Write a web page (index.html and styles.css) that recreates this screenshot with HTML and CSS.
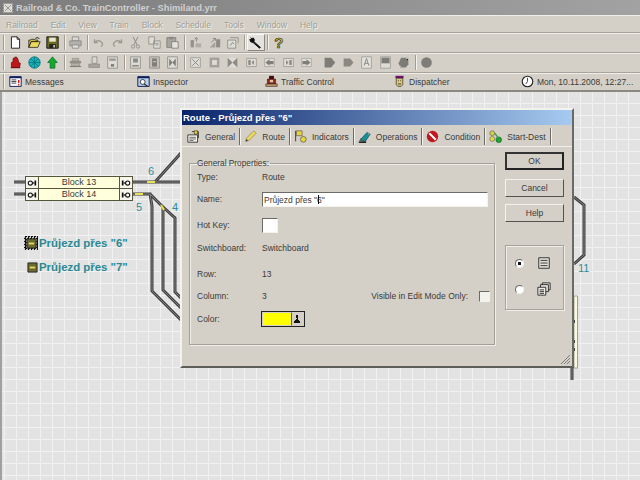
FILE: index.html
```html
<!DOCTYPE html>
<html>
  <head>
    <title>Railroad &amp; Co. TrainController - Shimiland.yrr</title>
    <link rel="stylesheet" href="styles.css">
  </head>

  <body>
    <svg class="defs" width="0" height="0">
      <symbol id="i-new" viewBox="0 0 16 16"><path d="M3 1h7l3 3v11H3z" fill="#fff" stroke="#000"/><path d="M10 1v3h3" fill="none" stroke="#000"/></symbol>
      <symbol id="i-open" viewBox="0 0 16 16"><path d="M1 14V5h2l1-1h4l1 1h3v2H4l-3 7z" fill="#c8b84a" stroke="#000" stroke-width=".8"/><path d="M1 14l3-7h11l-3 7z" fill="#e8d860" stroke="#000" stroke-width=".8"/><path d="M9 3q2-2 5 0" fill="none" stroke="#000"/></symbol>
      <symbol id="i-save" viewBox="0 0 16 16"><path d="M1 1h14v14H1z" fill="#6a6a20" stroke="#000"/><path d="M4 2h8v5H4z" fill="#e8e8d8"/><path d="M4 10h8v5H4z" fill="#222"/><path d="M9 11h2v3H9z" fill="#ccc"/></symbol>
      <symbol id="i-print" viewBox="0 0 16 16"><path d="M4 1h8v5H4z" fill="#d8d6d0" stroke="#888"/><path d="M1 6h14v6H1z" fill="#b4b2ac" stroke="#888"/><path d="M4 11h8v4H4z" fill="#e0ded8" stroke="#888"/></symbol>
      <symbol id="i-undo" viewBox="0 0 16 16"><path d="M3 4v4h4M3 8q4-4 8-1t0 6" fill="none" stroke="#9a9890" stroke-width="1.6"/></symbol>
      <symbol id="i-redo" viewBox="0 0 16 16"><path d="M13 4v4H9M13 8q-4-4-8-1t0 6" fill="none" stroke="#9a9890" stroke-width="1.6"/></symbol>
      <symbol id="i-cut" viewBox="0 0 16 16"><path d="M5 1l5 10M11 1L6 11" stroke="#8c8a84" fill="none" stroke-width="1.2"/><circle cx="5" cy="13" r="2" fill="none" stroke="#8c8a84"/><circle cx="11" cy="13" r="2" fill="none" stroke="#8c8a84"/></symbol>
      <symbol id="i-copy" viewBox="0 0 16 16"><path d="M1 1h7v9H1zM7 6h8v9H7z" fill="#dedcd6" stroke="#8c8a84"/><path d="M9 9h4M9 11h4" stroke="#8c8a84"/></symbol>
      <symbol id="i-paste" viewBox="0 0 16 16"><path d="M1 2h11v12H1z" fill="#a8a69e" stroke="#7c7a74"/><path d="M4 1h5v3H4z" fill="#888"/><path d="M7 7h8v8H7z" fill="#e6e4de" stroke="#7c7a74"/></symbol>
      <symbol id="i-edit1" viewBox="0 0 16 16"><path d="M2 5h4v9H2z" fill="#94928a"/><path d="M8 9h7v5H8z" fill="#b0aea6"/><path d="M9 2v5M7 4l2-2 2 2" fill="none" stroke="#7c7a74"/></symbol>
      <symbol id="i-edit2" viewBox="0 0 16 16"><path d="M2 14l7-7v7z" fill="#a4a29a"/><path d="M10 4h5v10h-5z" fill="#8e8c84"/><path d="M4 8l5-5M6 3h3v3" fill="none" stroke="#7c7a74"/></symbol>
      <symbol id="i-edit3" viewBox="0 0 16 16"><path d="M2 5h10v10H2z" fill="#dedcd6" stroke="#8c8a84"/><path d="M5 2h10v7" fill="none" stroke="#8c8a84"/><path d="M5 12l3-4 2 2" fill="none" stroke="#7c7a74"/></symbol>
      <symbol id="i-wrench" viewBox="0 0 16 16"><path d="M2 2l3 3M5 2a4 4 0 0 1 1 5l8 7-1 1-8-7a4 4 0 0 1-4-4" fill="#111" stroke="#111" stroke-width="1.2"/></symbol>
      <symbol id="i-hand" viewBox="0 0 16 16"><path d="M3 14V8l2-1V3l2-1 1-1 2 1 1 2 1 4 2 1-1 5z" fill="#c01818" stroke="#500" stroke-width=".8"/><path d="M2 14h12v1H2z" fill="#600"/></symbol>
      <symbol id="i-globe" viewBox="0 0 16 16"><circle cx="8" cy="8" r="7" fill="#18b0b8" stroke="#0a6c74"/><path d="M1 8h14M8 1v14M3 3l10 10M13 3L3 13" stroke="#0a6c74" stroke-width=".8"/></symbol>
      <symbol id="i-up" viewBox="0 0 16 16"><path d="M8 1l6 7h-3v7H5V8H2z" fill="#18a828" stroke="#064" stroke-width=".8"/></symbol>
      <symbol id="i-loco" viewBox="0 0 16 16"><path d="M1 6h14v3H1z" fill="#94928a"/><path d="M4 3h8v3H4zM3 9h10v3H3z" fill="#b4b2aa" stroke="#84827a" stroke-width=".7"/><path d="M1 13h14" stroke="#84827a" stroke-width="1.4"/></symbol>
      <symbol id="i-desk" viewBox="0 0 16 16"><path d="M5 1h6v8H5z" fill="#d8d6d0" stroke="#8c8a84"/><path d="M1 10h13v4H1z" fill="#a8a69e" stroke="#8c8a84"/></symbol>
      <symbol id="i-sheet" viewBox="0 0 16 16"><path d="M2 1h12v14H2z" fill="#dedcd6" stroke="#8c8a84"/><path d="M4 3h8v3H4z" fill="#9c9a92"/><path d="M6 10h4v3H6z" fill="#7c7a74"/></symbol>
      <symbol id="i-box1" viewBox="0 0 16 16"><path d="M2 1h12v14H2z" fill="#dedcd6" stroke="#8c8a84"/><path d="M5 3h6v5H5z" fill="#8c8a84"/><path d="M4 11h8v2H4z" fill="#8c8a84"/></symbol>
      <symbol id="i-box2" viewBox="0 0 16 16"><path d="M2 1h12v14H2z" fill="#c4c2ba" stroke="#8c8a84"/><path d="M5 3h6v10H5z" fill="#807e78"/><path d="M6 7h4" stroke="#dedcd6"/></symbol>
      <symbol id="i-box3" viewBox="0 0 16 16"><path d="M2 1h12v14H2z" fill="#dedcd6" stroke="#8c8a84"/><path d="M4 3l4 5-4 5zM12 3L8 8l4 5z" fill="#7c7a74"/></symbol>
      <symbol id="i-x" viewBox="0 0 16 16"><path d="M2 2h12v12H2z" fill="#dedcd6" stroke="#9c9a92"/><path d="M4 4l8 8M12 4l-8 8" stroke="#8c8a84" stroke-width="1.2"/></symbol>
      <symbol id="i-square" viewBox="0 0 16 16"><path d="M2 2h12v12H2z" fill="#a4a29a"/><path d="M5 5h6v6H5z" fill="#dedcd6"/></symbol>
      <symbol id="i-xx" viewBox="0 0 16 16"><path d="M2 2h12v12H2z" fill="#dedcd6"/><path d="M2 2l6 6-6 6zM14 2L8 8l6 6z" fill="#8c8a84"/></symbol>
      <symbol id="i-split" viewBox="0 0 16 16"><path d="M2 3h12v10H2z" fill="#dedcd6" stroke="#9c9a92"/><path d="M4 5h3v6H4z" fill="#8c8a84"/><path d="M11 5l-3 3 3 3z" fill="#8c8a84"/></symbol>
      <symbol id="i-left" viewBox="0 0 16 16"><path d="M2 3h12v10H2z" fill="#dedcd6" stroke="#aaa8a0"/><path d="M3 8l5-4v2h5v4H8v2z" fill="#807e78"/></symbol>
      <symbol id="i-split2" viewBox="0 0 16 16"><path d="M2 3h12v10H2z" fill="#dedcd6" stroke="#9c9a92"/><path d="M9 5h3v6H9z" fill="#8c8a84"/><path d="M5 5l3 3-3 3z" fill="#8c8a84"/></symbol>
      <symbol id="i-right" viewBox="0 0 16 16"><path d="M2 3h12v10H2z" fill="#dedcd6" stroke="#aaa8a0"/><path d="M13 8L8 4v2H3v4h5v2z" fill="#807e78"/></symbol>
      <symbol id="i-tag" viewBox="0 0 16 16"><path d="M2 2h8l5 6-5 6H2z" fill="#7e7c76"/></symbol>
      <symbol id="i-tag2" viewBox="0 0 16 16"><path d="M2 3h8l4 5-4 5H2z" fill="#8a8880"/></symbol>
      <symbol id="i-letter" viewBox="0 0 16 16"><path d="M2 1h12v14H2z" fill="#e4e2dc" stroke="#9c9a92"/><path d="M5 12l3-9 3 9M6 9h4" fill="none" stroke="#7c7a74"/></symbol>
      <symbol id="i-doc" viewBox="0 0 16 16"><path d="M2 1h12v14H2z" fill="#dedcd6" stroke="#9c9a92"/><path d="M3 2h10v7H3z" fill="#7e7c76"/></symbol>
      <symbol id="i-tree" viewBox="0 0 16 16"><path d="M5 2h9v8l-3 4H4L2 9z" fill="#7e7c76"/><path d="M2 13h3M11 3h3v3" stroke="#dedcd6"/></symbol>
      <symbol id="i-dot" viewBox="0 0 16 16"><circle cx="8" cy="8" r="6.5" fill="#7e7c76"/></symbol>
      <symbol id="i-msg" viewBox="0 0 16 16"><path d="M1 2h14v12H1z" fill="#fff" stroke="#102060" stroke-width="1.2"/><path d="M1 2h14v2H1z" fill="#102060"/><path d="M3 6h6M3 8h6M3 10h6" stroke="#222"/><path d="M12 6v4" stroke="#c00" stroke-width="1.6"/><path d="M12 11v2" stroke="#c00" stroke-width="1.4"/></symbol>
      <symbol id="i-insp" viewBox="0 0 16 16"><path d="M1 2h14v12H1z" fill="#b8d0e8" stroke="#102060" stroke-width="1.2"/><path d="M1 2h14v2H1z" fill="#102060"/><circle cx="7" cy="8.500" r="3" fill="#fff" stroke="#222"/><path d="M9 11l4 3" stroke="#222" stroke-width="1.4"/></symbol>
      <symbol id="i-traffic" viewBox="0 0 16 16"><path d="M5 1h6v4H5z" fill="#401010"/><path d="M3 5h10v6H3z" fill="#902820" stroke="#301010" stroke-width=".7"/><path d="M6 6h4v3H6z" fill="#d8c8a0"/><path d="M1 11h14v3H1z" fill="#c0a070" stroke="#301010" stroke-width=".7"/></symbol>
      <symbol id="i-disp" viewBox="0 0 16 16"><path d="M3 1h10v3H3z" fill="#701070"/><path d="M4 4h8v8l-2 2H6l-2-2z" fill="#e0c878" stroke="#222" stroke-width=".8"/><path d="M6 7h1M9 7h1M6 11h4" stroke="#222"/></symbol>
      <symbol id="i-clock" viewBox="0 0 16 16"><circle cx="8" cy="8" r="6.500" fill="#fff" stroke="#222" stroke-width="1.4"/><path d="M8 3.500V8l-2 3" fill="none" stroke="#222"/></symbol>
      <symbol id="i-general" viewBox="0 0 16 16"><path d="M1 6h12v9H1z" fill="#f4f2ea" stroke="#222"/><path d="M3 9h8M3 11h8M3 13h5" stroke="#555"/><path d="M6 2h8v8" fill="none" stroke="#222"/><path d="M9 1h4v4H9z" fill="#e8d040" stroke="#222" stroke-width=".7"/></symbol>
      <symbol id="i-pencil" viewBox="0 0 16 16"><path d="M2 14l1-4 9-9 3 3-9 9z" fill="#e8d860" stroke="#8a8040" stroke-width=".8"/><path d="M2 14l1-3 2 2z" fill="#333"/></symbol>
      <symbol id="i-flags" viewBox="0 0 16 16"><path d="M2 1v13" stroke="#222"/><path d="M3 1h7v6H3z" fill="#e8d040" stroke="#444" stroke-width=".7"/><circle cx="11.500" cy="11.500" r="3.500" fill="#e8d840" stroke="#444" stroke-width=".8"/></symbol>
      <symbol id="i-ops" viewBox="0 0 16 16"><path d="M2 13L11 3l4 2-6 9z" fill="#189098" stroke="#084850" stroke-width=".8"/><path d="M1 14h9v2H1z" fill="#222"/><path d="M11 2l3 1-1 3" fill="none" stroke="#bbb"/><path d="M3 10l3 3" stroke="#c02020"/></symbol>
      <symbol id="i-no" viewBox="0 0 16 16"><circle cx="8" cy="8" r="7" fill="#c01820"/><path d="M4 4l8 8" stroke="#fff" stroke-width="2.400"/></symbol>
      <symbol id="i-route" viewBox="0 0 16 16"><circle cx="4" cy="4" r="3" fill="#d8d040" stroke="#555" stroke-width=".7"/><circle cx="4" cy="11" r="3" fill="#e8d840" stroke="#555" stroke-width=".7"/><circle cx="12" cy="12" r="3.500" fill="#28a030" stroke="#064" stroke-width=".7"/><path d="M7 4l4 5" stroke="#28a030" stroke-width="1.500"/></symbol>
      <symbol id="i-list" viewBox="0 0 16 16"><path d="M2 2h12v12H2z" fill="#e4e2dc" stroke="#222"/><path d="M4 5h8M4 8h8M4 11h8" stroke="#222"/></symbol>
      <symbol id="i-stack" viewBox="0 0 16 16"><path d="M6 1h9v8H6z" fill="#e4e2dc" stroke="#222"/><path d="M4 3h9v8H4z" fill="#e4e2dc" stroke="#222"/><path d="M1 6h9v9H1z" fill="#f0eee8" stroke="#222"/><path d="M3 9h5M3 11h5M3 13h5" stroke="#222"/></symbol>
      <symbol id="i-conn" viewBox="0 0 12 12"><path d="M2 3v6" stroke="#111" stroke-width="2"/><path d="M3 6h5" stroke="#111" stroke-width="1.500"/><circle cx="8" cy="6" r="2.500" fill="#fff" stroke="#111" stroke-width="1.300"/></symbol>
      <symbol id="i-btn" viewBox="0 0 12 12"><path d="M1 1h10v10H1z" fill="#6a6a30" stroke="#222"/><path d="M3 5h6v2H3z" fill="#e8d860"/></symbol>
    </svg>

    <div class="titlebar">
      <svg class="app-icon"><use href="#i-x"/></svg>
      <span>Railroad &amp; Co. TrainController - Shimiland.yrr</span>
    </div>

    <div class="menubar">
      <span>Railroad</span>
      <span>Edit</span>
      <span>View</span>
      <span>Train</span>
      <span>Block</span>
      <span>Schedule</span>
      <span>Tools</span>
      <span>Window</span>
      <span>Help</span>
    </div>

    <div class="toolbar">
      <i class="grip"></i>
      <span class="tb"><svg><use href="#i-new"/></svg></span>
      <span class="tb"><svg><use href="#i-open"/></svg></span>
      <span class="tb"><svg><use href="#i-save"/></svg></span>
      <i class="sep"></i>
      <span class="tb"><svg><use href="#i-print"/></svg></span>
      <i class="sep"></i>
      <span class="tb"><svg><use href="#i-undo"/></svg></span>
      <span class="tb"><svg><use href="#i-redo"/></svg></span>
      <span class="tb"><svg><use href="#i-cut"/></svg></span>
      <span class="tb"><svg><use href="#i-copy"/></svg></span>
      <span class="tb"><svg><use href="#i-paste"/></svg></span>
      <i class="sep"></i>
      <span class="tb"><svg><use href="#i-edit1"/></svg></span>
      <span class="tb"><svg><use href="#i-edit2"/></svg></span>
      <span class="tb"><svg><use href="#i-edit3"/></svg></span>
      <i class="sep"></i>
      <span class="tb pressed"><svg><use href="#i-wrench"/></svg></span>
      <i class="sep"></i>
      <span class="tb help-icon">?</span>
    </div>

    <div class="toolbar">
      <i class="grip"></i>
      <span class="tb"><svg><use href="#i-hand"/></svg></span>
      <span class="tb"><svg><use href="#i-globe"/></svg></span>
      <span class="tb"><svg><use href="#i-up"/></svg></span>
      <i class="sep"></i>
      <span class="tb"><svg><use href="#i-loco"/></svg></span>
      <span class="tb"><svg><use href="#i-desk"/></svg></span>
      <span class="tb"><svg><use href="#i-sheet"/></svg></span>
      <i class="sep"></i>
      <span class="tb"><svg><use href="#i-box1"/></svg></span>
      <span class="tb"><svg><use href="#i-box2"/></svg></span>
      <span class="tb"><svg><use href="#i-box3"/></svg></span>
      <i class="sep"></i>
      <span class="tb"><svg><use href="#i-x"/></svg></span>
      <span class="tb"><svg><use href="#i-square"/></svg></span>
      <span class="tb"><svg><use href="#i-xx"/></svg></span>
      <span class="tb"><svg><use href="#i-split"/></svg></span>
      <span class="tb"><svg><use href="#i-left"/></svg></span>
      <span class="tb"><svg><use href="#i-split2"/></svg></span>
      <span class="tb"><svg><use href="#i-right"/></svg></span>
      <i class="gap"></i>
      <span class="tb"><svg><use href="#i-tag"/></svg></span>
      <span class="tb"><svg><use href="#i-tag2"/></svg></span>
      <span class="tb"><svg><use href="#i-letter"/></svg></span>
      <span class="tb"><svg><use href="#i-doc"/></svg></span>
      <span class="tb"><svg><use href="#i-tree"/></svg></span>
      <i class="sep"></i>
      <span class="tb"><svg><use href="#i-dot"/></svg></span>
    </div>

    <div class="viewbar">
      <i class="grip"></i>
      <span class="view"><svg><use href="#i-msg"/></svg>Messages</span>
      <span class="view"><svg><use href="#i-insp"/></svg>Inspector</span>
      <span class="view"><svg><use href="#i-traffic"/></svg>Traffic Control</span>
      <span class="view"><svg><use href="#i-disp"/></svg>Dispatcher</span>
      <span class="view view-clock"><svg><use href="#i-clock"/></svg>Mon, 10.11.2008, 12:27...</span>
    </div>

    <div class="canvas">
      <svg class="tracks" viewBox="0 92 640 388">
        <g class="rail-outer">
          <path d="M14 182H25M14 194H25M133 182H181M155 182L181 153M133 194H150L152 206V291L181 320M150 194L163 207V290L181 308M163 207L175 218V292L181 298"/>
          <path d="M574 197L584 205V255L574 264M572 368V380"/>
        </g>
        <g class="rail-inner">
          <path d="M14 182H25M14 194H25M133 182H181M155 182L181 153M133 194H150L152 206V291L181 320M150 194L163 207V290L181 308M163 207L175 218V292L181 298"/>
          <path d="M574 197L584 205V255L574 264M572 368V380"/>
        </g>
        <path class="rail-lit" d="M147 182H155M135 194H143M161 205L164 210"/>
        <rect class="side-block" x="574" y="296" width="3.500" height="72"/>
        <path class="side-marks" d="M574 320V323M574 340V343M574 348V351"/>
      </svg>

      <div class="block block-13">
        <span class="block-cap"><svg class="flip"><use href="#i-conn"/></svg></span>
        <span class="block-name">Block 13</span>
        <span class="block-cap"><svg><use href="#i-conn"/></svg></span>
      </div>
      <div class="block block-14">
        <span class="block-cap"><svg class="flip"><use href="#i-conn"/></svg></span>
        <span class="block-name">Block 14</span>
        <span class="block-cap"><svg><use href="#i-conn"/></svg></span>
      </div>

      <span class="num num-6">6</span>
      <span class="num num-5">5</span>
      <span class="num num-4">4</span>
      <span class="num num-11">11</span>

      <div class="route-btn route-6"><span class="route-icon selected"><svg><use href="#i-btn"/></svg></span>Průjezd přes "6"</div>
      <div class="route-btn route-7"><span class="route-icon"><svg><use href="#i-btn"/></svg></span>Průjezd přes "7"</div>

      <div class="dialog">
        <div class="dialog-title">Route - Průjezd přes "6"</div>
        <div class="tabs">
          <span class="tab"><svg><use href="#i-general"/></svg>General</span>
          <span class="tab"><svg><use href="#i-pencil"/></svg>Route</span>
          <span class="tab"><svg><use href="#i-flags"/></svg>Indicators</span>
          <span class="tab"><svg><use href="#i-ops"/></svg>Operations</span>
          <span class="tab"><svg><use href="#i-no"/></svg>Condition</span>
          <span class="tab"><svg><use href="#i-route"/></svg>Start-Dest</span>
        </div>
        <div class="dialog-body">
          <fieldset class="group">
            <legend>General Properties:</legend>
            <div class="props">
              <label>Type:</label>
              <div>Route</div>
              <label for="name">Name:</label>
              <div class="name-cell"><input class="name-input" type="text" id="name" value='Průjezd přes "6"'><i class="ibeam"></i></div>
              <label>Hot Key:</label>
              <div><span class="hotkey"></span></div>
              <label>Switchboard:</label>
              <div>Switchboard</div>
              <label>Row:</label>
              <div>13</div>
              <label>Column:</label>
              <div class="column-cell">
                <span>3</span>
                <span class="visible-label">Visible in Edit Mode Only:</span>
                <span class="check"></span>
              </div>
              <label>Color:</label>
              <div class="color-pick"><span class="swatch"></span><span class="drop"></span></div>
            </div>
          </fieldset>
          <div class="side">
            <button type="button" class="default">OK</button>
            <button type="button">Cancel</button>
            <button type="button">Help</button>
            <div class="view-mode">
              <div class="mode"><span class="radio on"></span><svg><use href="#i-list"/></svg></div>
              <div class="mode"><span class="radio"></span><svg><use href="#i-stack"/></svg></div>
            </div>
          </div>
        </div>
        <svg class="grip-corner" viewBox="0 0 12 12"><path d="M11 2L2 11M11 5L5 11M11 8L8 11"/></svg>
      </div>
    </div>
  </body>

</html>
```

FILE: styles.css
```css
html, body {
  margin: 0;
  width: 640px;
  height: 480px;
  overflow: hidden;
}

body {
  font-family: "Liberation Sans", Arial, sans-serif;
  font-size: 8.5px;
  line-height: 14px;
  color: #3a3a38;
  background: #d4d0c8;
}

.defs {
  position: absolute;
}

.titlebar {
  display: flex;
  align-items: center;
  height: 15px;
  padding-left: 2px;
  background: linear-gradient(90deg, #7c7c7c, #a2a2a2);
  color: #d0d0d0;
  font-size: 9.300px;
  font-weight: bold;
}

.app-icon {
  width: 12px;
  height: 12px;
  margin-right: 2px;
}

.menubar {
  display: flex;
  gap: 13px;
  height: 17px;
  padding: 1px 0 0 6px;
  align-items: center;
  box-sizing: border-box;
  border-top: 1px solid #f0eee8;
  color: #a09e96;
  font-size: 8.500px;
  text-shadow: 1px 1px 0 #f2f0ea;
}

.toolbar {
  display: flex;
  align-items: center;
  height: 20px;
  padding-left: 3px;
  box-sizing: border-box;
  border-top: 1px solid #a8a49c;
  box-shadow: inset 0 1px 0 #f0eee8;
}

.viewbar {
  display: flex;
  align-items: center;
  height: 20px;
  padding-left: 3px;
  box-sizing: border-box;
  border-top: 1px solid #a8a49c;
  border-bottom: 2px solid #8a8880;
  box-shadow: inset 0 1px 0 #f0eee8;
}

.grip, .sep {
  display: block;
  width: 1px;
  height: 15px;
  background: #a09c94;
  border-right: 1px solid #f4f2ec;
}

.grip {
  margin-right: 1.5px;
}

.sep {
  margin: 0 1px 0 1.5px;
}

.gap {
  width: 4.5px;
}

.tb {
  display: flex;
  flex: none;
  align-items: center;
  justify-content: center;
  width: 18.5px;
  height: 17px;
}

.tb svg {
  width: 13px;
  height: 13px;
}

.pressed {
  box-sizing: border-box;
  background: #e4e2dc;
  border: 1px solid;
  border-color: #f8f8f4 #8a8880 #8a8880 #f8f8f4;
}

.help-icon {
  font-size: 15px;
  font-weight: bold;
  color: #d4bc2c;
  -webkit-text-stroke: 0.6px #222;
}

.view {
  display: flex;
  flex: none;
  align-items: center;
  gap: 3px;
  width: 128px;
  box-sizing: border-box;
  padding-left: 2.500px;
  font-size: 8.500px;
}

.view svg {
  width: 13px;
  height: 13px;
}

.view-clock {
  width: 120px;
  white-space: nowrap;
}

.canvas {
  position: relative;
  height: 388px;
  overflow: hidden;
  background-color: #e3e3e3;
  background-image:
    linear-gradient(90deg, #f1f1f1 1px, transparent 1px),
    linear-gradient(#f1f1f1 1px, transparent 1px);
  background-size: 12px 12px;
  background-position: 2px 11px;
  border-left: 2px solid #a0a0a0;
}

.tracks {
  position: absolute;
  left: -2px;
  top: 0;
  width: 640px;
  height: 388px;
}

.rail-outer {
  fill: none;
  stroke: #3e3e3e;
  stroke-width: 3;
}

.rail-inner {
  fill: none;
  stroke: #808080;
  stroke-width: 1;
}

.rail-lit {
  fill: none;
  stroke: #e8e050;
  stroke-width: 2;
}

.side-block {
  fill: #fbfbdc;
  stroke: #555;
  stroke-width: 0.5;
}

.side-marks {
  stroke: #111;
  stroke-width: 1.5;
}

/* blocks and labels sit on the track canvas at their grid places */
.block {
  position: absolute;
  left: 23px;
  display: flex;
  width: 108px;
  height: 13px;
  box-sizing: border-box;
  border: 1px solid #55553c;
  background: #ffffdc;
  line-height: 11px;
}

.block-13 {
  top: 84px;
}

.block-14 {
  top: 96px;
}

.block-cap {
  display: flex;
  flex: none;
  align-items: center;
  justify-content: center;
  width: 12px;
  background: #f6f6ec;
}

.block-cap:first-child {
  border-right: 1px solid #55553c;
}

.block-cap:last-child {
  border-left: 1px solid #55553c;
}

.block-cap svg {
  width: 10px;
  height: 10px;
}

.flip {
  transform: scaleX(-1);
}

.block-name {
  flex: 1;
  text-align: center;
  font-size: 9px;
}

.num {
  position: absolute;
  color: #2c8c9c;
  font-size: 11px;
  line-height: 12px;
}

.num-6 { left: 146px; top: 73px; }
.num-5 { left: 134px; top: 109px; }
.num-4 { left: 170px; top: 109px; }
.num-11 { left: 576px; top: 170px; }

.route-btn {
  position: absolute;
  display: flex;
  align-items: center;
  color: #2a8a94;
  font-size: 11.400px;
  font-weight: bold;
  white-space: nowrap;
}

.route-6 { left: 22px; top: 144px; }
.route-7 { left: 24px; top: 168px; }

.route-icon {
  display: flex;
  align-items: center;
  justify-content: center;
  width: 12px;
  height: 12px;
  margin-right: 1px;
}

.route-icon svg {
  width: 11px;
  height: 11px;
}

.route-icon.selected {
  width: 14px;
  height: 14px;
  background: repeating-conic-gradient(#111 0 25%, #c8c8c8 0 50%) 0 0 / 3px 3px;
}

.dialog {
  position: absolute;
  left: 178px;
  top: 16px;
  width: 394px;
  height: 260px;
  box-sizing: border-box;
  border: 2px solid;
  border-color: #f4f2ec #6a6a66 #5c5c58 #f4f2ec;
  background: #d4d0c8;
}

.dialog-title {
  height: 15px;
  padding-left: 1px;
  background: linear-gradient(90deg, #0a246a, #a6caf0);
  color: #fff;
  font-size: 9.500px;
  font-weight: bold;
  line-height: 15px;
}

.tabs {
  display: flex;
  height: 18px;
  margin-top: 3px;
  padding-left: 5px;
  border-bottom: 1px solid #f0eee8;
  font-size: 8.500px;
}

.tab {
  display: flex;
  align-items: center;
  gap: 5px;
  padding-right: 4px;
  margin-right: 4px;
  height: 17px;
  border-right: 1px solid #6e6c66;
  box-shadow: 1px 0 0 #f4f2ec;
  white-space: nowrap;
}

.tab svg {
  flex: none;
  width: 13px;
  height: 13px;
}

.dialog-body {
  display: flex;
  align-items: flex-start;
  padding: 4px 0 0 7px;
}

.group {
  box-sizing: border-box;
  flex: none;
  width: 306px;
  height: 187px;
  margin: 7px 0 0 0;
  padding: 0 0 0 7px;
  border: 1px solid #a4a098;
  box-shadow: 1px 1px 0 #f0eee8, inset 1px 1px 0 #f0eee8;
}

.group legend {
  padding: 0 1px 0 0;
  margin-left: 0;
  font-size: 8.300px;
  line-height: 10px;
}

.props {
  display: grid;
  grid-template-columns: 65px 228px;
  grid-template-rows: 22px 26px 23px 26px 22px 23px 16px;
  margin-top: 2px;
}

.props input {
  font: inherit;
  color: inherit;
}

.name-cell {
  position: relative;
}

.name-input {
  display: block;
  box-sizing: border-box;
  width: 226px;
  height: 15px;
  margin: 0;
  padding: 0 1px;
  border: 1px solid;
  border-color: #6a6a66 #f4f2ec #f4f2ec #6a6a66;
  background: #fff;
  outline: none;
}

.ibeam {
  position: absolute;
  left: 56px;
  top: 3px;
  width: 1px;
  height: 9px;
  background: #111;
}

.hotkey {
  display: block;
  box-sizing: border-box;
  width: 16px;
  height: 15px;
  border: 1px solid;
  border-color: #6a6a66 #f4f2ec #f4f2ec #6a6a66;
  background: #fff;
}

.column-cell {
  display: flex;
  align-items: center;
  height: 14px;
}

.visible-label {
  margin-left: auto;
}

.check {
  width: 11px;
  height: 11px;
  box-sizing: border-box;
  margin-left: 11px;
  border: 1px solid;
  border-color: #6a6a66 #f4f2ec #f4f2ec #6a6a66;
  background: #f4f2ec;
}

.color-pick {
  display: flex;
  width: 44px;
  height: 16px;
  margin: -1px 0 0 -1px;
  box-sizing: border-box;
  border: 1px solid #222;
}

.swatch {
  flex: 1;
  background: #ffff00;
  border: 1px solid #d4d0c8;
  border-right-color: #555;
}

.drop {
  position: relative;
  width: 12px;
  background: #d4d0c8;
}

.drop::before {
  content: "";
  position: absolute;
  left: 4px;
  top: 3px;
  width: 2px;
  height: 3px;
  background: #111;
}

.drop::after {
  content: "";
  position: absolute;
  left: 2px;
  top: 6px;
  width: 6px;
  height: 4px;
  border-bottom: 1px solid #111;
  background: linear-gradient(135deg, #d4d0c8 50%, transparent 50%) 0 0 / 3px 3px no-repeat,
    linear-gradient(225deg, #d4d0c8 50%, transparent 50%) 3px 0 / 3px 3px no-repeat,
    #111;
  background-clip: content-box;
}

.side {
  display: flex;
  flex: none;
  flex-direction: column;
  width: 59px;
  margin-left: 10px;
  margin-top: 1px;
}

.side button {
  width: 59px;
  height: 18px;
  padding: 0;
  margin-bottom: 7px;
  border: 1px solid;
  border-color: #f4f2ec #55534e #55534e #f4f2ec;
  background: #d4d0c8;
  color: inherit;
  font-family: inherit;
  font-size: 8.500px;
}

.side button.default {
  margin-bottom: 9px;
  border: 2px solid;
  border-color: #333 #222 #222 #333;
}

.view-mode {
  display: flex;
  flex-direction: column;
  gap: 8px;
  box-sizing: border-box;
  width: 59px;
  height: 65px;
  margin-top: 16px;
  padding: 8px 0 0 9px;
  border: 1px solid #a8a49c;
  box-shadow: 1px 1px 0 #f0eee8, inset 1px 1px 0 #f0eee8;
}

.mode {
  display: flex;
  align-items: center;
  gap: 13px;
  height: 18px;
}

.mode svg {
  width: 14px;
  height: 14px;
}

.radio {
  display: block;
  box-sizing: border-box;
  width: 9px;
  height: 9px;
  border-radius: 50%;
  border: 1px solid;
  border-color: #6a6a66 #f4f2ec #f4f2ec #6a6a66;
  background: #fff;
}

.radio.on {
  background: radial-gradient(circle, #111 1.500px, #fff 2px);
}

.grip-corner {
  position: absolute;
  right: 1px;
  bottom: 1px;
  width: 12px;
  height: 12px;
  fill: none;
  stroke: #807e78;
}
```
